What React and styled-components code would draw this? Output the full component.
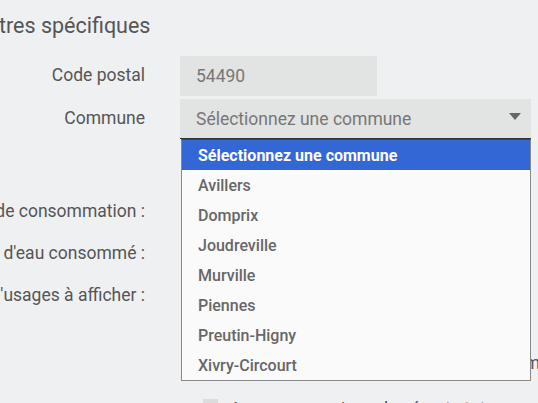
import React from 'react';
import styled, { createGlobalStyle } from 'styled-components';

const Global = createGlobalStyle`
  html, body {
    margin: 0;
    padding: 0;
    background: #eff0f2;
    overflow: hidden;
  }
  body {
    font-family: Roboto, "Liberation Sans", sans-serif;
  }
`;

const Page = styled.div`
  width: 538px;
  height: 403px;
  overflow: hidden;
  position: relative;
`;

const Title = styled.h2`
  margin: 14px 0 0 -75px;
  font-size: 21.5px;
  line-height: 24px;
  font-weight: 400;
  color: #555;
  white-space: nowrap;
`;

const Form = styled.div`
  display: grid;
  grid-template-columns: 145px 1fr;
  column-gap: 35px;
  margin-top: 18px;
`;

const Label = styled.div`
  display: flex;
  justify-content: flex-end;
  align-items: center;
  white-space: nowrap;
  height: ${p => p.$h || 42}px;
  margin-top: ${p => p.$mt || 0}px;
  padding-bottom: 3px;
  box-sizing: border-box;
  font-size: 17.5px;
  color: #555;
`;

const Field = styled.div`
  position: relative;
  display: flex;
  align-items: ${p => p.$top ? 'flex-start' : 'center'};
  height: ${p => p.$h || 42}px;
  margin-top: ${p => p.$mt || 0}px;
  padding-left: ${p => p.$pl || 0}px;
  white-space: nowrap;
  font-size: 17.5px;
  color: #555;
`;

const Input = styled.div`
  box-sizing: border-box;
  width: ${p => p.$w}px;
  height: 40px;
  padding: 0 16px;
  display: flex;
  align-items: center;
  background: #e2e3e3;
  color: #777;
  font-size: 17.5px;
`;

const Select = styled(Input)`
  justify-content: space-between;
  border-bottom: 1px solid #333;
  padding-right: 10px;
`;

const Caret = styled.span`
  width: 0;
  height: 0;
  border-left: 6px solid transparent;
  border-right: 6px solid transparent;
  border-top: 7px solid #666;
  margin-top: -4px;
`;

const Dropdown = styled.ul`
  position: absolute;
  top: 40px;
  left: 1px;
  width: 350px;
  box-sizing: border-box;
  margin: 0;
  padding: 0;
  list-style: none;
  background: #fafafa;
  border: 1px solid #888;
  border-top: 1px solid #444;
  z-index: 10;
`;

const Option = styled.li`
  height: 30px;
  display: flex;
  align-items: center;
  padding-left: 16px;
  font-size: 16px;
  font-weight: ${p => (p.$active ? 700 : 500)};
  color: ${p => (p.$active ? '#fff' : '#676767')};
  background: ${p => (p.$active ? '#3367d6' : 'transparent')};
`;

const Check = styled.span`
  display: inline-block;
  width: 15px;
  height: 15px;
  background: #dcdcdc;
  margin-right: 12px;
  flex-shrink: 0;
`;

const communes = [
  'Sélectionnez une commune',
  'Avillers',
  'Domprix',
  'Joudreville',
  'Murville',
  'Piennes',
  'Preutin-Higny',
  'Xivry-Circourt',
];

export default function App() {
  return (
    <Page>
      <Global />
      <Title>Paramètres spécifiques</Title>
      <Form>
        <Label $h={40}>Code postal</Label>
        <Field $h={40}>
          <Input $w={197}>54490</Input>
        </Field>

        <Label $h={40} $mt={3}>Commune</Label>
        <Field $h={40} $mt={3}>
          <Select $w={351}>
            Sélectionnez une commune
            <Caret />
          </Select>
          <Dropdown>
            {communes.map((c, i) => (
              <Option key={c} $active={i === 0}>{c}</Option>
            ))}
          </Dropdown>
        </Field>

        <Label $mt={52}>Période de consommation :</Label>
        <Field $mt={52} />

        <Label>Volume d'eau consommé :</Label>
        <Field />

        <Label>Type d'usages à afficher :</Label>
        <Field />

        <Label $mt={26} $h={40} />
        <Field $mt={26} $h={40} $pl={20}>
          Afficher seulement les usages de consommation
        </Field>

        <Label $h={24} $mt={16} />
        <Field $h={24} $mt={16} $pl={23} $top>
          <Check />
          Avec comparaison des écarts totaux par commune
        </Field>
      </Form>
    </Page>
  );
}
